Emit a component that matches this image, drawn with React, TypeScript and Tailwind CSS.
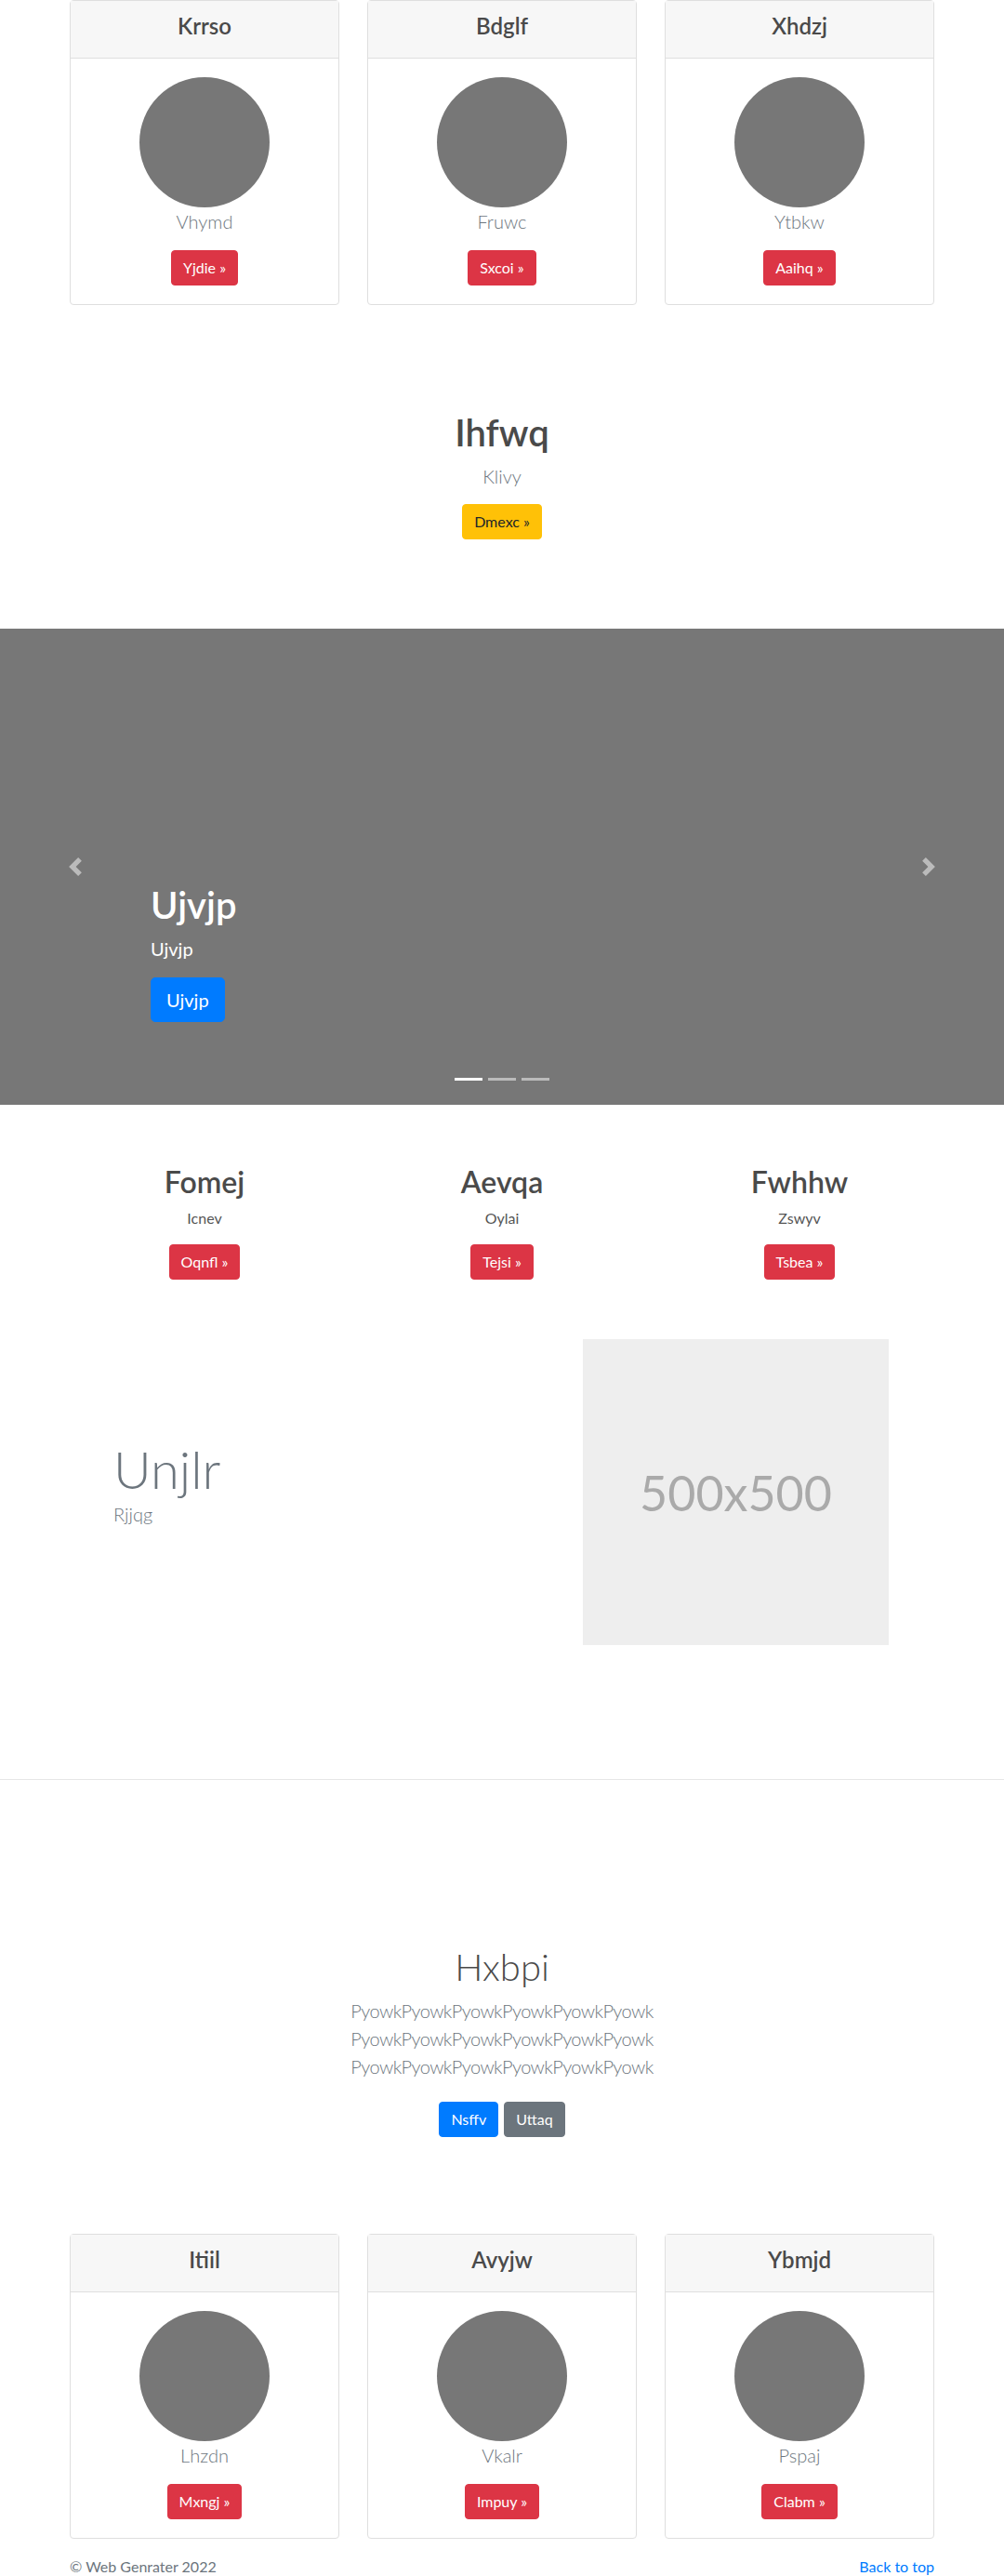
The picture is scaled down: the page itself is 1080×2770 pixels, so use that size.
import React from 'react'

const topCards = [
  { title: 'Krrso', sub: 'Vhymd', btn: 'Yjdie' },
  { title: 'Bdglf', sub: 'Fruwc', btn: 'Sxcoi' },
  { title: 'Xhdzj', sub: 'Ytbkw', btn: 'Aaihq' },
]

const bottomCards = [
  { title: 'Itiil', sub: 'Lhzdn', btn: 'Mxngj' },
  { title: 'Avyjw', sub: 'Vkalr', btn: 'Impuy' },
  { title: 'Ybmjd', sub: 'Pspaj', btn: 'Clabm' },
]

const features = [
  { title: 'Fomej', sub: 'Icnev', btn: 'Oqnfl' },
  { title: 'Aevqa', sub: 'Oylai', btn: 'Tejsi' },
  { title: 'Fwhhw', sub: 'Zswyv', btn: 'Tsbea' },
]

const RedButton = ({ label }: { label: string }) => (
  <a className="inline-block rounded border border-[#dc3545] bg-[#dc3545] px-3 py-1.5 text-[16px] leading-6 text-white">
    {label} »
  </a>
)

const ProfileCard = ({ title, sub, btn }: { title: string; sub: string; btn: string }) => {
  return (
    <div className="rounded border border-[#dfdfdf] bg-white text-center">
      <div className="h-[62px] border-b border-[#dfdfdf] bg-[#f7f7f7] pt-[12px]">
        <h4 className="text-[24px] font-semibold leading-[29px] text-[#4a4a4a]">{title}</h4>
      </div>
      <div className="flex flex-col items-center p-5">
        <div className="h-[140px] w-[140px] rounded-full bg-[#777777]" />
        <p className="mb-4 text-[20px] font-light leading-[30px] text-[#6c757d]">{sub}</p>
        <RedButton label={btn} />
      </div>
    </div>
  )
}

const Chevron = ({ dir }: { dir: 'prev' | 'next' }) => (
  <svg width="20" height="20" viewBox="0 0 8 8" fill="#fff" className="opacity-50">
    {dir === 'prev' ? (
      <path d="M5.25 0l-4 4 4 4 1.5-1.5-2.5-2.5 2.5-2.5-1.5-1.5z" />
    ) : (
      <path d="M2.75 0l-1.5 1.5 2.5 2.5-2.5 2.5 1.5 1.5 4-4-4-4z" />
    )}
  </svg>
)

const App = () => {
  const pyowk = 'PyowkPyowkPyowkPyowkPyowkPyowk'
  return (
    <div className="min-h-[2770px] bg-white font-['Lato','Segoe_UI',sans-serif] text-[#212529]">
      {/* top cards */}
      <div className="mx-auto grid w-[930px] grid-cols-3 gap-[30px]">
        {topCards.map((c) => (
          <ProfileCard key={c.title} {...c} />
        ))}
      </div>

      {/* intro */}
      <div className="pb-[96px] pt-[113px] text-center">
        <h1 className="mb-2 text-[40px] font-semibold leading-[48px] text-[#4a4a4a]">Ihfwq</h1>
        <p className="mb-[15px] text-[20px] font-light leading-[30px] text-[#6c757d]">Klivy</p>
        <a className="inline-block rounded border border-[#ffc107] bg-[#ffc107] px-3 py-1.5 text-[16px] leading-6 text-[#212529]">
          Dmexc »
        </a>
      </div>

      {/* carousel */}
      <div className="relative h-[512px] bg-[#777777]">
        <div className="absolute inset-y-0 left-0 flex w-[15%] items-center justify-center">
          <Chevron dir="prev" />
        </div>
        <div className="absolute inset-y-0 right-0 flex w-[15%] items-center justify-center">
          <Chevron dir="next" />
        </div>
        <div className="absolute left-[162px] top-[273px] text-white">
          <h1 className="mb-2 text-[40px] font-semibold leading-[48px]">Ujvjp</h1>
          <p className="mb-4 text-[20px] leading-[30px]">Ujvjp</p>
          <a className="inline-block rounded-[5px] border border-[#007bff] bg-[#007bff] px-4 py-2 text-[20px] leading-[30px] text-white">
            Ujvjp
          </a>
        </div>
        <div className="absolute inset-x-0 bottom-[26px] flex justify-center gap-[6px]">
          <span className="h-[3px] w-[30px] bg-white" />
          <span className="h-[3px] w-[30px] bg-white/50" />
          <span className="h-[3px] w-[30px] bg-white/50" />
        </div>
      </div>

      {/* features */}
      <div className="mx-auto grid w-[960px] grid-cols-3 pt-[64px]">
        {features.map((f) => (
          <div key={f.title} className="px-[15px] text-center">
            <h2 className="mb-2 text-[32px] font-semibold leading-[38px] text-[#4a4a4a]">{f.title}</h2>
            <p className="mb-4 text-[16px] leading-6 text-[#555555]">{f.sub}</p>
            <RedButton label={f.btn} />
          </div>
        ))}
      </div>

      {/* featurette */}
      <div className="mx-auto mt-[64px] flex w-[930px] items-center">
        <div className="flex-1 pb-[20px] pl-[47px]">
          <h2 className="text-[56px] font-light leading-[67px] text-[#6c757d]">Unjlr</h2>
          <p className="text-[20px] font-light leading-[30px] text-[#6c757d]">Rjjqg</p>
        </div>
        <div className="mr-[49px] flex h-[329px] w-[329px] items-center justify-center bg-[#eeeeee]">
          <span className="text-[52px] leading-none text-[#aaaaaa]">500x500</span>
        </div>
      </div>

      <hr className="mt-[144px] border-t border-[#e6e6e6]" />

      {/* jumbotron */}
      <div className="pt-[177px] text-center">
        <h1 className="mb-2 text-[40px] font-light leading-[48px] text-[#4a4a4a]">Hxbpi</h1>
        <p className="text-[20px] font-light leading-[30px] tracking-[-0.6px] text-[#6c757d]">
          {pyowk}
          <br />
          {pyowk}
          <br />
          {pyowk}
        </p>
        <div className="mt-[23px] flex justify-center gap-[6px]">
          <a className="rounded border border-[#007bff] bg-[#007bff] px-3 py-1.5 text-[16px] leading-6 text-white">Nsffv</a>
          <a className="rounded border border-[#6c757d] bg-[#6c757d] px-3 py-1.5 text-[16px] leading-6 text-white">Uttaq</a>
        </div>
      </div>

      {/* bottom cards */}
      <div className="mx-auto mt-[104px] grid w-[930px] grid-cols-3 gap-[30px]">
        {bottomCards.map((c) => (
          <ProfileCard key={c.title} {...c} />
        ))}
      </div>

      <footer className="mx-auto mt-[18px] flex w-[930px] justify-between text-[16px] leading-6">
        <p className="text-[#6c757d]">© Web Genrater 2022</p>
        <a className="text-[#007bff]">Back to top</a>
      </footer>
    </div>
  )
}

export default App
